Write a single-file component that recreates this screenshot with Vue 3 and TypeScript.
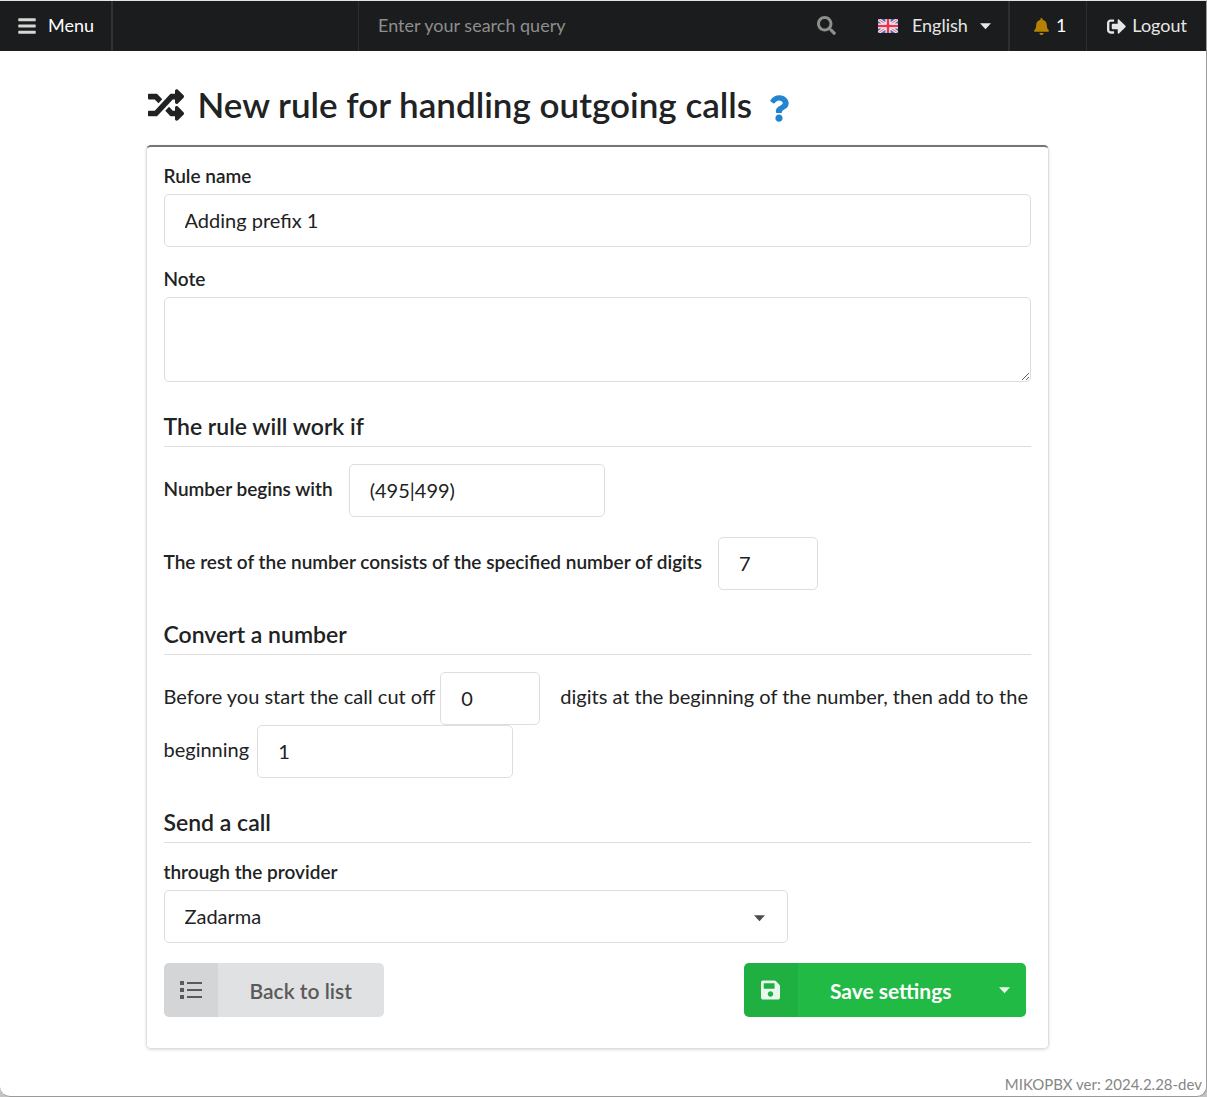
<script setup lang="ts">
import { ref } from 'vue'

const language = ref('English')
const query = ref('')
const ruleName = ref('Adding prefix 1')
const note = ref('')
const beginsWith = ref('(495|499)')
const restDigits = ref('7')
const trimDigits = ref('0')
const prefix = ref('1')
const provider = ref('Zadarma')
const notifications = ref(1)
</script>

<template>
  <div class="page">
    <header class="topbar">
      <button type="button" class="bar-item menu">
        <svg class="icon-bars" viewBox="0 0 448 512" aria-hidden="true">
          <path d="M16 132h416c8.800 0 16-7.200 16-16V76c0-8.800-7.200-16-16-16H16C7.200 60 0 67.200 0 76v40c0 8.800 7.200 16 16 16zm0 160h416c8.800 0 16-7.200 16-16v-40c0-8.800-7.200-16-16-16H16c-8.800 0-16 7.200-16 16v40c0 8.800 7.200 16 16 16zm0 160h416c8.800 0 16-7.200 16-16v-40c0-8.800-7.200-16-16-16H16c-8.800 0-16 7.200-16 16v40c0 8.800 7.200 16 16 16z" />
        </svg>
        <span>Menu</span>
      </button>
      <div class="spacer"></div>
      <form class="search" role="search" @submit.prevent>
        <input v-model="query" type="text" placeholder="Enter your search query" aria-label="Search" />
        <button type="submit" aria-label="Search">
          <svg viewBox="0 0 512 512" aria-hidden="true">
            <path d="M505 442.700L405.300 343c-4.500-4.500-10.600-7-17-7H372c27.600-35.300 44-79.700 44-128C416 93.100 322.900 0 208 0S0 93.100 0 208s93.100 208 208 208c48.300 0 92.700-16.400 128-44v16.300c0 6.400 2.500 12.500 7 17l99.700 99.700c9.400 9.400 24.600 9.400 33.900 0l28.300-28.300c9.400-9.400 9.400-24.600.1-34zM208 336c-70.700 0-128-57.200-128-128 0-70.700 57.200-128 128-128 70.700 0 128 57.200 128 128 0 70.700-57.200 128-128 128z" />
          </svg>
        </button>
      </form>
      <label class="language">
        <svg class="flag" viewBox="0 0 20 14" aria-hidden="true">
          <rect width="20" height="14" fill="#4a63b8" />
          <path d="M0 0L20 14M20 0L0 14" stroke="#f3e6ee" stroke-width="3.200" />
          <path d="M0 0L20 14M20 0L0 14" stroke="#e0607a" stroke-width="1" />
          <path d="M10 0V14M0 7H20" stroke="#fff" stroke-width="5" />
          <path d="M10 0V14M0 7H20" stroke="#e8344e" stroke-width="2.600" />
        </svg>
        <select v-model="language" aria-label="Language">
          <option>English</option>
        </select>
        <svg class="caret" viewBox="0 0 10 6" aria-hidden="true"><path d="M0 0H10L5 5.500Z" /></svg>
      </label>
      <a href="#" class="bar-item alerts" aria-label="Notifications">
        <svg class="icon-bell" viewBox="0 0 448 512" aria-hidden="true">
          <path d="M224 512c35.320 0 63.970-28.650 63.970-64H160.030c0 35.350 28.650 64 63.970 64zm215.390-149.710c-19.320-20.760-55.470-51.990-55.470-154.290 0-77.700-54.480-139.900-127.940-155.160V32c0-17.670-14.320-32-31.980-32s-31.980 14.330-31.980 32v20.840C118.560 68.100 64.080 130.300 64.080 208c0 102.300-36.150 133.530-55.470 154.290-6 6.450-8.660 14.160-8.610 21.710.11 16.400 12.980 32 32.100 32h383.800c19.120 0 32-15.600 32.100-32 .05-7.550-2.610-15.270-8.610-21.710z" />
        </svg>
        <span>{{ notifications }}</span>
      </a>
      <a href="#" class="bar-item logout">
        <svg class="icon-logout" viewBox="0 0 512 512" aria-hidden="true">
          <path d="M497 273L329 441c-15 15-41 4.500-41-17v-96H152c-13.300 0-24-10.700-24-24v-96c0-13.300 10.700-24 24-24h136V88c0-21.400 25.900-32 41-17l168 168c9.300 9.400 9.300 24.600 0 34zM192 436v-40c0-6.600-5.400-12-12-12H96c-17.700 0-32-14.300-32-32V160c0-17.700 14.300-32 32-32h84c6.600 0 12-5.400 12-12V76c0-6.600-5.400-12-12-12H96c-53 0-96 43-96 96v192c0 53 43 96 96 96h84c6.600 0 12-5.400 12-12z" />
        </svg>
        <span>Logout</span>
      </a>
    </header>

    <main class="content">
      <h1>
        <svg class="icon-random" viewBox="0 0 512 512" aria-hidden="true">
          <path d="M504.971 359.029c9.373 9.373 9.373 24.569 0 33.941l-80 79.984c-15.010 15.010-40.971 4.490-40.971-16.971V416h-58.785a12.004 12.004 0 0 1-8.773-3.812l-70.556-75.596 53.333-57.143L352 336h32v-39.981c0-21.438 25.943-31.998 40.971-16.971l80 79.981zM12 176h84l52.781 56.551 53.333-57.143-70.556-75.596A11.999 11.999 0 0 0 122.785 96H12c-6.627 0-12 5.373-12 12v56c0 6.627 5.373 12 12 12zm372 0v39.984c0 21.460 25.961 31.980 40.971 16.971l80-79.984c9.373-9.373 9.373-24.569 0-33.941l-80-79.981C409.943 24.021 384 34.582 384 56.019V96h-58.785a12.004 12.004 0 0 0-8.773 3.812L96 336H12c-6.627 0-12 5.373-12 12v56c0 6.627 5.373 12 12 12h110.785c3.326 0 6.503-1.381 8.773-3.812L352 176h32z" />
        </svg>
        <span>New rule for handling outgoing calls</span>
        <a href="#" class="help" aria-label="Help">
          <svg viewBox="0 0 384 512" aria-hidden="true">
            <path d="M202.021 0C122.202 0 70.503 32.703 29.914 91.026c-7.363 10.580-5.093 25.086 5.178 32.874l43.138 32.709c10.373 7.865 25.132 6.026 33.253-4.148 25.049-31.381 43.630-49.449 82.757-49.449 30.764 0 68.816 19.799 68.816 49.631 0 22.552-18.617 34.134-48.993 51.164-35.423 19.860-82.299 44.576-82.299 106.405V320c0 13.255 10.745 24 24 24h72.471c13.255 0 24-10.745 24-24v-5.773c0-42.860 125.268-44.645 125.268-160.627C377.504 66.256 286.902 0 202.021 0zM192 373.459c-38.196 0-69.271 31.075-69.271 69.271 0 38.195 31.075 69.270 69.271 69.270s69.271-31.075 69.271-69.271-31.075-69.270-69.271-69.270z" />
          </svg>
        </a>
      </h1>

      <form class="segment" @submit.prevent>
        <div class="field">
          <label for="rule-name">Rule name</label>
          <input id="rule-name" v-model="ruleName" type="text" />
        </div>
        <div class="field">
          <label for="note">Note</label>
          <textarea id="note" v-model="note"></textarea>
        </div>

        <h2>The rule will work if</h2>
        <div class="inline-field">
          <label for="begins-with">Number begins with</label>
          <input id="begins-with" v-model="beginsWith" class="medium" type="text" />
        </div>
        <div class="inline-field">
          <label for="rest-digits">The rest of the number consists of the specified number of digits</label>
          <input id="rest-digits" v-model="restDigits" class="short" type="text" />
        </div>

        <h2>Convert a number</h2>
        <p class="sentence">
          <label for="trim-digits">Before you start the call cut off</label>
          <input id="trim-digits" v-model="trimDigits" class="short" type="text" />
          <span>digits at the beginning of the number, then add to the</span> <label for="prefix">beginning</label>
          <input id="prefix" v-model="prefix" class="medium" type="text" />
        </p>

        <h2>Send a call</h2>
        <div class="field provider">
          <label for="provider">through the provider</label>
          <div class="dropdown">
            <select id="provider" v-model="provider">
              <option>Zadarma</option>
            </select>
            <svg class="caret" viewBox="0 0 10 6" aria-hidden="true"><path d="M0 0H10L5 5.500Z" /></svg>
          </div>
        </div>

        <div class="actions">
          <button type="button" class="btn back">
            <span class="btn-icon">
              <svg class="icon-list" viewBox="0 0 22 18" aria-hidden="true">
                <path d="M0 0h4v4H0zM0 7h4v4H0zM0 14h4v4H0zM7 1h15v2H7zM7 8h15v2H7zM7 15h15v2H7z" />
              </svg>
            </span>
            <span class="btn-text">Back to list</span>
          </button>
          <div class="save-group">
            <button type="submit" class="btn save">
              <span class="btn-icon">
                <svg class="icon-save" viewBox="0 0 448 512" aria-hidden="true">
                  <path d="M433.941 129.941l-83.882-83.882A48 48 0 0 0 316.118 32H48C21.490 32 0 53.490 0 80v352c0 26.510 21.490 48 48 48h352c26.510 0 48-21.490 48-48V163.882a48 48 0 0 0-14.059-33.941zM224 416c-35.346 0-64-28.654-64-64 0-35.346 28.654-64 64-64s64 28.654 64 64c0 35.346-28.654 64-64 64zm96-304.520V212c0 6.627-5.373 12-12 12H76c-6.627 0-12-5.373-12-12V108c0-6.627 5.373-12 12-12h228.520c3.183 0 6.235 1.264 8.485 3.515l3.480 3.480A11.996 11.996 0 0 1 320 111.480z" />
                </svg>
              </span>
              <span class="btn-text">Save settings</span>
            </button>
            <button type="button" class="btn more" aria-label="More save options">
              <svg class="caret" viewBox="0 0 10 6" aria-hidden="true"><path d="M0 0H10L5 5.500Z" /></svg>
            </button>
          </div>
        </div>
      </form>
    </main>

    <footer>MIKOPBX ver: 2024.2.28-dev</footer>
  </div>
</template>

<style>
body {
  background: #c4c4c4;
}
</style>

<style scoped>
* {
  box-sizing: border-box;
}

.page {
  display: flex;
  flex-direction: column;
  min-height: 100vh;
  border: 1px solid #9a9a9a;
  border-top-color: #dfe8df;
  border-left: 0;
  border-radius: 0 0 10px 10px;
  background: #fff;
  color: #212223;
  font-family: Lato, 'Liberation Sans', sans-serif;
  font-size: 20px;
  line-height: 28px;
}

svg {
  display: block;
  flex: none;
  fill: currentColor;
}

input,
textarea,
select,
button {
  margin: 0;
  font: inherit;
  color: inherit;
}

a {
  color: inherit;
  text-decoration: none;
}

.caret {
  width: 11px;
  height: 7px;
}

/* Top bar */
.topbar {
  display: flex;
  height: 50px;
  background: #1b1c1d;
  color: #e6e6e6;
  font-size: 18px;
}

.bar-item {
  display: flex;
  align-items: center;
  border: 0;
  background: none;
}

.bar-item span {
  padding-bottom: 2px;
}

.menu {
  gap: 12px;
  width: 113px;
  padding: 0 18px;
  border-right: 2px solid #303132;
  color: #fff;
}

.icon-bars {
  width: 18px;
  height: 20px;
  fill: #d6d6d6;
}

.spacer {
  width: 245px;
}

.search {
  display: flex;
  flex: 1;
  border-left: 1px solid #2d2e2f;
}

.search input {
  flex: 1;
  min-width: 0;
  padding: 0 19px 2px;
  border: 0;
  background: none;
  outline: 0;
}

.search input::placeholder {
  color: #8d8e8e;
}

.search button {
  padding: 0 20px 2px;
  border: 0;
  background: none;
  color: #8d8e8e;
}

.search svg {
  width: 19px;
  height: 19px;
}

.language {
  display: flex;
  align-items: center;
  padding: 0 17px 0 22px;
}

.flag {
  width: 20px;
  height: 14px;
  margin-right: 14px;
}

.language select {
  padding: 0 0 2px;
  border: 0;
  background: none;
  appearance: none;
}

.language .caret {
  margin-left: 12px;
}

.alerts {
  gap: 7px;
  padding: 0 20px 0 24px;
  border-left: 2px solid #2d2e2f;
  color: #fff;
}

.icon-bell {
  width: 15px;
  height: 17px;
  fill: #b58105;
}

.logout {
  gap: 6px;
  padding: 0 19px 0 20px;
  border-left: 1px solid #2d2e2f;
}

.icon-logout {
  width: 19px;
  height: 19px;
}

/* Page content */
.content {
  width: 100%;
  max-width: 915px;
  margin: 0 auto;
  padding: 34px 12px 0 0;
}

h1 {
  display: flex;
  align-items: center;
  margin: 0 0 20px;
  padding-left: 2px;
  font-size: 35px;
  font-weight: 600;
  line-height: 38px;
}

h1 span {
  padding-bottom: 2px;
}

.icon-random {
  width: 36px;
  height: 36px;
  margin-right: 14px;
}

.help {
  margin-left: 17px;
  color: #2185d0;
}

.help svg {
  width: 20px;
  height: 27px;
  margin-top: 6px;
}

.segment {
  padding: 17px 17px 31px;
  border: 1px solid #dededf;
  border-top: 2px solid #767676;
  border-radius: 5px;
  box-shadow: 0 1px 3px rgba(34, 36, 38, 0.15);
}

.field {
  margin-bottom: 20px;
}

.field label {
  display: block;
  margin-bottom: 6px;
  font-size: 19px;
  font-weight: 600;
  line-height: 24px;
}

.segment input,
.segment textarea,
.segment select {
  width: 100%;
  height: 53px;
  padding: 0 20px 2px;
  border: 1px solid #dededf;
  border-radius: 5px;
  background: #fff;
}

.segment textarea {
  display: block;
  height: 85px;
  padding: 12px 20px;
  resize: vertical;
}

.segment input,
.segment select {
  vertical-align: middle;
}

.segment .short {
  width: 100px;
}

.segment .medium {
  width: 256px;
}

h2 {
  margin: 31px 0 17px;
  padding-bottom: 7px;
  border-bottom: 1px solid #dededf;
  font-size: 23px;
  font-weight: 600;
  line-height: 26px;
}

.inline-field {
  display: flex;
  align-items: center;
  gap: 16px;
  margin-bottom: 20px;
}

.inline-field label {
  padding-bottom: 4px;
  font-size: 19px;
  font-weight: 600;
}

.sentence {
  margin: 0;
}

.sentence .short {
  margin: 0 20px 0 5px;
}

.sentence .medium {
  margin-left: 8px;
}

.provider {
  width: 72%;
}

.dropdown {
  position: relative;
}

.dropdown select {
  display: block;
  appearance: none;
}

.dropdown .caret {
  position: absolute;
  top: 25px;
  right: 23px;
  fill: #4c4c4c;
  pointer-events: none;
}

/* Buttons */
.actions {
  display: flex;
  justify-content: space-between;
  padding-right: 5px;
}

.save-group {
  display: flex;
}

.btn {
  display: flex;
  align-items: center;
  height: 54px;
  padding: 0;
  border: 0;
  border-radius: 5px;
  overflow: hidden;
  font-size: 21px;
  font-weight: 700;
}

.btn-icon {
  display: flex;
  align-items: center;
  justify-content: center;
  width: 54px;
  height: 100%;
  background: rgba(0, 0, 0, 0.05);
}

.btn-text {
  padding: 2px 32px 0;
}

.back {
  background: #e0e1e2;
  color: #5a5a5b;
  font-weight: 600;
}

.icon-list {
  width: 22px;
  height: 18px;
}

.save,
.more {
  background: #21ba45;
  color: #fff;
}

.save {
  border-radius: 5px 0 0 5px;
}

.icon-save {
  width: 19px;
  height: 22px;
  opacity: 0.9;
}

.more {
  padding: 0 16px 0 15px;
  border-radius: 0 5px 5px 0;
}

.more .caret {
  opacity: 0.9;
}

footer {
  margin-top: auto;
  padding: 0 4px 2px;
  color: #868686;
  font-size: 15px;
  line-height: 20px;
  text-align: right;
}
</style>
